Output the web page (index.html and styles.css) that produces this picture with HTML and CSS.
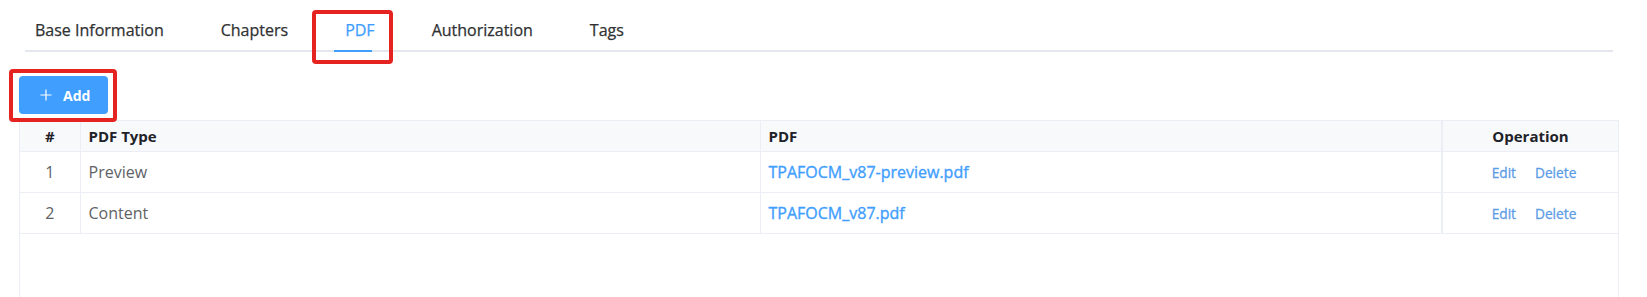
FILE: index.html
```html
<!DOCTYPE html>
<html>
<head>
<meta charset="utf-8">
<link rel="stylesheet" href="styles.css">
</head>
<body>
<div class="page">
  <div class="tab-nav">
    <div class="tab">Base Information</div>
    <div class="tab">Chapters</div>
    <div class="tab active">PDF</div>
    <div class="tab">Authorization</div>
    <div class="tab">Tags</div>
    <div class="active-bar"></div>
  </div>
  <div class="toolbar">
    <button class="btn-add">
      <svg class="plus" width="12" height="12" viewBox="0 0 12 12"><path d="M6 0.5V11.5M0.5 6H11.5" stroke="#fff" stroke-width="1.2" fill="none"/></svg>
      <span>Add</span>
    </button>
  </div>
  <div class="table-wrap">
    <table class="grid">
      <colgroup>
        <col class="c-idx"><col class="c-type"><col class="c-pdf"><col class="c-op">
      </colgroup>
      <thead>
        <tr><th class="center">#</th><th>PDF Type</th><th>PDF</th><th class="center op">Operation</th></tr>
      </thead>
      <tbody>
        <tr>
          <td class="center">1</td><td>Preview</td>
          <td><a class="file">TPAFOCM_v87-preview.pdf</a></td>
          <td class="center op ops"><a class="act">Edit</a><a class="act">Delete</a></td>
        </tr>
        <tr>
          <td class="center">2</td><td>Content</td>
          <td><a class="file">TPAFOCM_v87.pdf</a></td>
          <td class="center op ops"><a class="act">Edit</a><a class="act">Delete</a></td>
        </tr>
      </tbody>
    </table>
  </div>
  <div class="mark mark-pdf"></div>
  <div class="mark mark-add"></div>
</div>
</body>
</html>
```
FILE: styles.css
```css
html, body {
  margin: 0;
  padding: 0;
  background: #fff;
}
body {
  font-family: "Open Sans", "Noto Sans", sans-serif;
  color: #303133;
  overflow: hidden;
}
.page {
  position: relative;
  padding-top: 10px;
  height: 297px;
  box-sizing: border-box;
  overflow: hidden;
}
.tab-nav {
  position: relative;
  display: flex;
  margin-left: 25px;
  margin-right: 34px;
  padding-left: 10px;
  border-bottom: 2px solid #e4e7ed;
}
.tab {
  height: 40px;
  line-height: 40px;
  font-size: 16px;
  padding: 0 28.5px;
  color: #303133;
  white-space: nowrap;
  -webkit-text-stroke: 0.25px #303133;
}
.tab:first-child {
  padding-left: 0;
}
.tab.active {
  color: #409eff;
  -webkit-text-stroke: 0.25px #409eff;
}
.active-bar {
  position: absolute;
  left: 309px;
  bottom: -2px;
  width: 38px;
  height: 2px;
  background: #409eff;
}
.toolbar {
  margin-top: 24px;
  margin-left: 19px;
  display: flex;
}
.btn-add {
  display: flex;
  align-items: center;
  gap: 11px;
  height: 38px;
  width: 89px;
  padding: 0 0 0 21px;
  border: none;
  border-radius: 4px;
  background: #409eff;
  color: #fff;
  font-family: "Open Sans", "Noto Sans", sans-serif;
  font-size: 14px;
  font-weight: 700;
  box-sizing: border-box;
}
.plus {
  display: block;
}
.table-wrap {
  margin-top: 6px;
  margin-left: 19px;
  width: 1600px;
  height: 177px;
  border-left: 1px solid #ebeef5;
  border-right: 1px solid #ebeef5;
  box-sizing: border-box;
}
.grid {
  width: 100%;
  table-layout: fixed;
  border-collapse: collapse;
}
.c-idx { width: 60px; }
.c-type { width: 680px; }
.c-pdf { width: 682px; }
.c-op { width: auto; }
.grid th, .grid td {
  border-bottom: 1px solid #ebeef5;
  border-right: 1px solid #ebeef5;
  text-align: left;
  padding: 0 8px;
  font-size: 16px;
  white-space: nowrap;
}
.grid th:last-child, .grid td:last-child {
  border-right: none;
}
.grid thead tr {
  border-top: 1px solid #ebeef5;
}
.grid th {
  height: 30px;
  background: #f8f9fb;
  color: #1f2329;
  font-weight: 700;
  font-size: 15px;
}
.grid td {
  height: 40px;
  color: #606266;
}
.grid .center {
  text-align: center;
}
.grid th.op, .grid td.op {
  border-left: 2px solid #ebeef5;
}
.grid td.ops {
  padding-left: 7px;
  padding-right: 0;
}
.file {
  color: #409eff;
  text-decoration: none;
  -webkit-text-stroke: 0.35px #409eff;
}
.act {
  color: #5c9ce6;
  font-size: 13.7px;
  margin: 0 9.5px;
  -webkit-text-stroke: 0.3px #5c9ce6;
}
.mark {
  position: absolute;
  border: 4px solid #e52421;
  border-radius: 4px;
  box-sizing: border-box;
}
.mark-pdf {
  left: 312px;
  top: 10px;
  width: 81px;
  height: 54px;
}
.mark-add {
  left: 9px;
  top: 69px;
  width: 108px;
  height: 53px;
}
```
